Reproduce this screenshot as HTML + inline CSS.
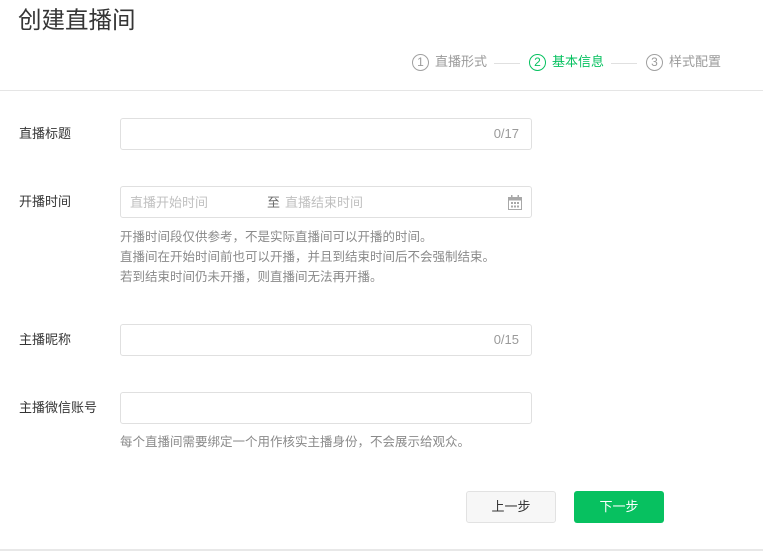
<!DOCTYPE html>
<html><head><meta charset="utf-8"><style>
*{margin:0;padding:0;box-sizing:border-box}
body{width:763px;height:551px;background:#fff;font-family:"Liberation Sans","Noto Sans CJK SC",sans-serif;position:relative;overflow:hidden;color:#353535}
.a{position:absolute}
.t{left:18px;top:5px;font-size:23.5px;color:#353535;line-height:30px}
.step{top:53px;font-size:13px;color:#9a9a9a;line-height:18px;display:flex;align-items:center}
.c{display:inline-block;width:17px;height:17px;border:1px solid #a0a0a0;border-radius:50%;font-size:12px;line-height:15px;text-align:center;margin-right:6px}
.g{color:#07c160}.g .c{border-color:#07c160}
.ln{height:1px;background:#e0e0e0;top:63px}
.hr{left:0;width:763px;height:1px;background:#e5e5e5}
.lb{left:19px;font-size:13px;color:#353535;line-height:18px}
.in{left:120px;width:412px;height:32px;border:1px solid #e0e0e0;border-radius:3px}
.cnt{right:12px;top:6px;font-size:13px;color:#9a9a9a;line-height:18px}
.ph{font-size:13px;color:#c0c0c0;line-height:18px;top:7px}
.h{left:120px;font-size:12.5px;color:#8a8a8a;line-height:20px}
.btn{width:90px;height:32px;border-radius:3px;font-size:13px;text-align:center;line-height:30px}
</style></head><body>
<div class="a t">创建直播间</div>
<div class="a step" style="left:412px"><span class="c">1</span>直播形式</div>
<div class="a ln" style="left:494px;width:26px"></div>
<div class="a step g" style="left:529px"><span class="c">2</span>基本信息</div>
<div class="a ln" style="left:611px;width:26px"></div>
<div class="a step" style="left:646px"><span class="c">3</span>样式配置</div>
<div class="a hr" style="top:90px"></div>

<div class="a lb" style="top:125px">直播标题</div>
<div class="a in" style="top:118px"><span class="a cnt">0/17</span></div>

<div class="a lb" style="top:193px">开播时间</div>
<div class="a in" style="top:186px">
<span class="a ph" style="left:9px">直播开始时间</span>
<span class="a ph" style="left:146px;color:#6a6a6a">至</span>
<span class="a ph" style="left:164px">直播结束时间</span>
<svg class="a" style="left:387px;top:8px" width="14" height="15" viewBox="0 0 14 15"><rect x="0.5" y="2.5" width="13" height="12" fill="none" stroke="#a8a8a8"/><rect x="0.5" y="2.5" width="13" height="3" fill="#a8a8a8"/><rect x="3" y="0" width="1.5" height="3" fill="#a8a8a8"/><rect x="9.5" y="0" width="1.5" height="3" fill="#a8a8a8"/><g fill="#a8a8a8"><rect x="3" y="7" width="2" height="2"/><rect x="6" y="7" width="2" height="2"/><rect x="9" y="7" width="2" height="2"/><rect x="3" y="10.5" width="2" height="2"/><rect x="6" y="10.5" width="2" height="2"/><rect x="9" y="10.5" width="2" height="2"/></g></svg>
</div>
<div class="a h" style="top:227px">开播时间段仅供参考，不是实际直播间可以开播的时间。<br>直播间在开始时间前也可以开播，并且到结束时间后不会强制结束。<br>若到结束时间仍未开播，则直播间无法再开播。</div>

<div class="a lb" style="top:331px">主播昵称</div>
<div class="a in" style="top:324px"><span class="a cnt">0/15</span></div>

<div class="a lb" style="top:399px">主播微信账号</div>
<div class="a in" style="top:392px"></div>
<div class="a h" style="top:432px">每个直播间需要绑定一个用作核实主播身份，不会展示给观众。</div>

<div class="a btn" style="left:466px;top:491px;background:#f7f7f7;border:1px solid #e2e2e2;color:#353535">上一步</div>
<div class="a btn" style="left:574px;top:491px;background:#07c160;color:#fff;line-height:32px">下一步</div>
<div class="a hr" style="top:549px;height:2px;background:#e8e8e8"></div>
</body></html>
